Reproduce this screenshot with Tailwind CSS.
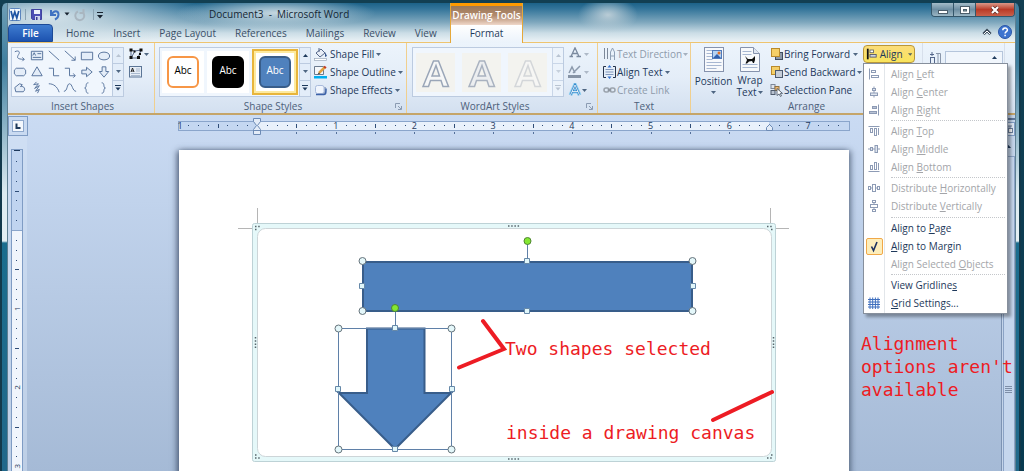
<!DOCTYPE html>
<html lang="en">
<head>
<meta charset="utf-8">
<title>Document3 - Microsoft Word</title>
<script src="https://cdn.jsdelivr.net/npm/@tailwindcss/browser@4"></script>
</head>
<body class="min-h-screen bg-linear-to-b from-[#123f52] to-[#073a50] font-['Open_Sans','Noto_Sans',sans-serif] text-[10px] leading-[14px] text-[#1e395b]">
<svg class="hidden" aria-hidden="true">
  <symbol id="caret" viewBox="0 0 5 3"><path d="M0 0h5L2.500 3z" fill="currentColor" opacity=".75"/></symbol>
  <symbol id="up" viewBox="0 0 5 3"><path d="M0 3h5L2.500 0z" fill="currentColor"/></symbol>
  <symbol id="more" viewBox="0 0 6 6"><path d="M0 .5h6" stroke="currentColor"/><path d="M.5 2.500h5L3 5.500z" fill="currentColor"/></symbol>
  <symbol id="launch" viewBox="0 0 7 7"><path d="M.5 5V.5H5M3 3l3 3M6.500 3v3.500H3" fill="none" stroke="#8b9bb2"/></symbol>
</svg>
<div class="flex h-screen min-h-[471px] pt-[3px]">
  <div class="w-2 shrink-0 rounded-tl-md border-l-2 border-r border-[#12394b] border-r-[#5e7f92] bg-[linear-gradient(to_bottom,#6f9fb7_0,#3f7f9f_60px,#dcebf1_190px,#e4eff3_238px,#1b6d8e_240px,#20688a_100%)]"></div>

  <div class="flex min-w-0 flex-1 flex-col">
    <header class="flex h-10 bg-[radial-gradient(ellipse_30px_18px_at_600px_12px,#b9ccd6_0,#b9ccd600_100%),linear-gradient(to_bottom,#1c6288_0,#34759a_15%,#7ea7bd_48%,#cbdde6_75%,#f0f5f8_100%)]">
      <div class="flex w-[442px] flex-col border-b border-[#eec46f] bg-[radial-gradient(ellipse_100px_16px_at_268px_10px,#c5d7e0_0,#c5d7e000_100%),radial-gradient(ellipse_160px_40px_at_40px_14px,#d5e3ea_0,#d5e3ea00_100%)]">
        <div class="flex h-[21px] items-center">
          <svg class="h-4 w-[100px]" viewBox="8 5 100 16" fill="none">
            <rect x="9.500" y="7.500" width="11" height="12" rx="1" fill="#f3f8fd" stroke="#5b84bd"/><path d="M11 10l1.800 7 2-6 2 6 2-7" stroke="#1f55a4" stroke-width="1.700"/>
            <path d="M25.500 8v11M93.500 8v11" stroke="#8aa3b2"/>
            <path d="M31.500 8.500h10v10h-9l-1-1z" fill="#4d4fb4" stroke="#4143a0"/><path d="M34 9h6v4h-6z" fill="#eef2fb"/><path d="M35 15h5v4h-5z" fill="#cfd5ee"/><path d="M36 16h1.500v3H36z" fill="#3a3c90"/>
            <path d="M51 9v5h5M51.500 13.500c3-5 7-3.500 7 0 0 2-1.500 4-3.500 5" stroke="#4072c2" stroke-width="2"/>
            <path d="M64.500 11.500h5l-2.500 3zM97 14h6l-3 3.500z" fill="#17222e"/><path d="M97 11.500h6" stroke="#17222e"/>
            <path d="M78 10.500a4.500 4.500 0 1 0 5 1M83.500 8v4h-4" stroke="#a9b6c0" stroke-width="2"/>
          </svg>
          <h1 class="ml-[101px] whitespace-pre text-[10px] text-[#142633]">Document3  -  Microsoft Word</h1>
        </div>
        <nav class="flex h-[18px] items-stretch whitespace-nowrap text-[#3a4e67]">
          <button class="w-[45px] shrink-0 rounded-t-sm border border-[#1c4a97] bg-linear-to-b from-[#3f7cd0] to-[#1d53b0] font-semibold text-white">File</button>
          <div class="ml-[13px] flex gap-[19px]">
            <button>Home</button><button>Insert</button><button>Page Layout</button><button>References</button><button>Mailings</button><button>Review</button><button>View</button>
          </div>
        </nav>
      </div>
      <div class="flex w-[73px] flex-col border-x border-[#e5a83a]">
        <div class="flex h-[22px] items-center justify-center whitespace-nowrap border-t-3 border-[#ff9a00] bg-linear-to-b from-[#9a7858] via-[#b28b6e] to-[#f0d8ca] pb-0.5 font-semibold text-white">Drawing Tools</div>
        <button class="flex-1 bg-linear-to-b from-white to-[#ebf3fb] pb-0.5">Format</button>
      </div>
      <div class="flex flex-1 flex-col items-end border-b border-[#eec46f]">
        <div class="flex h-[14px] overflow-hidden rounded-b-sm border border-t-0 border-[#34566a]">
          <button aria-label="Minimize" class="flex w-[22px] items-center justify-center border-r border-[#34566a] bg-linear-to-b from-[#a4bcc9] via-[#6d8ea2] to-[#9bb6c4]"><svg class="h-3 w-3" viewBox="0 0 12 12"><rect x="1.500" y="6.500" width="9" height="3" fill="#fff" stroke="#4c5e6b"/></svg></button>
          <button aria-label="Maximize" class="flex w-[22px] items-center justify-center border-r border-[#34566a] bg-linear-to-b from-[#a4bcc9] via-[#6d8ea2] to-[#9bb6c4]"><svg class="h-3 w-3" viewBox="0 0 12 12"><rect x="1.500" y="2.500" width="9" height="7" fill="#fff" stroke="#4c5e6b"/><rect x="4.500" y="5.500" width="3" height="1.500" fill="#8aa" stroke="#4c5e6b"/></svg></button>
          <button aria-label="Close" class="flex w-[38px] items-center justify-center bg-linear-to-b from-[#d99788] via-[#b93a27] to-[#c9604a]"><svg class="h-3 w-3" viewBox="0 0 12 12" fill="none"><path d="M3 3l6 6M9 3l-6 6" stroke="#5b2a26" stroke-width="3.600"/><path d="M3 3l6 6M9 3l-6 6" stroke="#fff" stroke-width="2.200"/></svg></button>
        </div>
        <div class="flex flex-1 items-center gap-[5px] pr-[3px] pt-1">
          <button aria-label="Minimize the ribbon"><svg class="h-3 w-3" viewBox="0 0 12 12" fill="none"><path d="M2.500 8L6 4.500 9.500 8" stroke="#3b4a5a" stroke-width="3"/><path d="M3 8l3-3 3 3" stroke="#fff"/></svg></button>
          <button aria-label="Help"><svg class="h-[14px] w-[14px]" viewBox="0 0 14 14"><circle cx="7" cy="7" r="6.500" fill="#3d74cf" stroke="#2a56a6"/><path d="M4.800 5.300c0-3 4.600-3 4.600-.3 0 1.700-2.300 1.700-2.300 3.600M7.100 9.800v1.500" fill="none" stroke="#fff" stroke-width="1.500"/></svg></button>
        </div>
      </div>
    </header>

    <section aria-label="Ribbon" class="relative z-10 flex h-[72px] border-b-2 border-[#c5a569] bg-linear-to-b from-[#ecf4fc] via-[#e4edf8] to-[#d3e0f0]">
      <div class="flex w-[147px] shrink-0 flex-col border-r border-[#f0cf8e] pl-[3px] pt-1">
        <div class="flex gap-1">
          <div class="flex h-[50px] w-[113px] border border-[#bccbe0] bg-[#f0f6fd]">
            <div id="shapes" class="grid flex-1 grid-cols-6 grid-rows-3"></div>
            <div class="flex w-[11px] flex-col divide-y divide-[#bccbe0] border-l border-[#bccbe0] bg-[#e3edf9]">
              <button aria-label="Scroll up" class="flex flex-1 items-center justify-center text-[#b9c4d2]"><svg class="h-[3px] w-[5px]"><use href="#up"/></svg></button>
              <button aria-label="Scroll down" class="flex flex-1 items-center justify-center"><svg class="h-[3px] w-[5px]"><use href="#caret"/></svg></button>
              <button aria-label="More shapes" class="flex flex-1 items-center justify-center"><svg class="h-[6px] w-[6px]"><use href="#more"/></svg></button>
            </div>
          </div>
          <div class="flex flex-col">
            <button aria-label="Edit shape" class="flex h-[14px] items-center"><svg class="h-[14px] w-4" viewBox="0 0 16 14" fill="none"><path d="M3 3l4 1 6-1M3 3v8h7L13 3M3 11l4-7" stroke="#55678a"/><path d="M1.500 1.500h3v3h-3zM11.500 1.500h3v3h-3zM1.500 9h3v3h-3zM9 9h3v3H9zM5.500 3.500h2v2h-2zM11 6h2v2h-2z" fill="#111"/></svg><svg class="h-[3px] w-[5px]"><use href="#caret"/></svg></button>
            <button aria-label="Text box" class="mt-1 flex h-[14px] items-center"><svg class="h-3 w-[14px]" viewBox="0 0 14 12" fill="none"><rect x="1.500" y=".5" width="12" height="10.500" fill="#e6edf6" stroke="#5b7596"/><path d="M3 6l1.500-4L6 6M3.500 5h2" stroke="#222"/><path d="M8 3h4M8 5h4M3 7.500h9M3 9.500h9" stroke="#a9b9ce"/></svg></button>
          </div>
        </div>
        <div class="pt-0.5 text-center text-[#4c607a]">Insert Shapes</div>
      </div>

      <div class="flex w-[252px] shrink-0 flex-col border-r border-[#f0cf8e] pl-1 pt-1">
        <div class="flex gap-[3px]">
          <div class="flex h-[50px] w-[152px] shrink-0 border border-[#bccbe0] bg-[#f0f6fd]">
            <div class="flex flex-1 items-center gap-[3px] pl-[2px]">
              <button class="flex h-[42px] w-[42px] items-center justify-center bg-white"><span class="flex h-8 w-8 items-center justify-center rounded-md border-2 border-[#f79646] pb-1 text-black">Abc</span></button>
              <button class="flex h-[42px] w-[42px] items-center justify-center bg-white"><span class="flex h-8 w-8 items-center justify-center rounded-md border-2 border-black bg-black pb-1 text-white">Abc</span></button>
              <button class="flex h-[46px] w-[46px] items-center justify-center border-2 border-[#e8b53c] bg-white shadow-[inset_0_0_0_2px_#fdeaa0]"><span class="flex h-8 w-8 items-center justify-center rounded-md border-2 border-[#385d8a] bg-[#4f81bd] pb-1 text-white">Abc</span></button>
            </div>
            <div class="flex w-[11px] flex-col divide-y divide-[#bccbe0] border-l border-[#bccbe0] bg-[#e3edf9]">
              <button aria-label="Scroll up" class="flex flex-1 items-center justify-center"><svg class="h-[3px] w-[5px]"><use href="#up"/></svg></button>
              <button aria-label="Scroll down" class="flex flex-1 items-center justify-center"><svg class="h-[3px] w-[5px]"><use href="#caret"/></svg></button>
              <button aria-label="More styles" class="flex flex-1 items-center justify-center"><svg class="h-[6px] w-[6px]"><use href="#more"/></svg></button>
            </div>
          </div>
          <div class="flex flex-col">
            <button class="flex h-[14px] items-center gap-0.5 whitespace-nowrap"><svg class="h-[14px] w-[14px] shrink-0" viewBox="0 0 14 14" fill="none"><path d="M2 6l5-4 4 4-5 4z" fill="#e8eef7" stroke="#55678a"/><path d="M5 1v4" stroke="#55678a"/><path d="M11 5l2 4-2 1z" fill="#35568f"/><rect x=".5" y="11.500" width="12" height="2" fill="#fff" stroke="#9aa8ba" stroke-width=".7"/></svg>Shape Fill<svg class="h-[3px] w-[5px]"><use href="#caret"/></svg></button>
            <button class="mt-1 flex h-[14px] items-center gap-0.5 whitespace-nowrap"><svg class="h-[14px] w-[14px] shrink-0" viewBox="0 0 14 14" fill="none"><path d="M.5 1.500h9v8h-9z" fill="#f4f7fb" stroke="#6b7b90"/><path d="M5 8l6-6" stroke="#e0a040" stroke-width="2.500"/><path d="M10 1.500l2 1.500" stroke="#c03a2a" stroke-width="2"/><path d="M3.500 9.500l1.500-2 1 1z" fill="#222"/><rect y="11" width="13" height="2.500" fill="#00aeef"/></svg>Shape Outline<svg class="h-[3px] w-[5px]"><use href="#caret"/></svg></button>
            <button class="mt-1 flex h-[14px] items-center gap-0.5 whitespace-nowrap"><svg class="h-[14px] w-[14px] shrink-0" viewBox="0 0 14 14"><path d="M4 4h8l-1 7-7 1z" fill="#9aabc8"/><rect x="1.500" y="2.500" width="8.500" height="8" rx="2" fill="#f0f5fd" stroke="#a9bbdc"/><path d="M2 11.500h8c2 0 2-2 2-6" fill="none" stroke="#3c62a8" stroke-width="1.500"/></svg>Shape Effects<svg class="h-[3px] w-[5px]"><use href="#caret"/></svg></button>
          </div>
        </div>
        <div class="flex items-center pt-0.5 text-[#4c607a]"><span class="flex-1 pr-2 text-center">Shape Styles</span><button aria-label="Format shape" class="mr-1"><svg class="h-[7px] w-[7px]"><use href="#launch"/></svg></button></div>
      </div>

      <div class="flex w-[191px] shrink-0 flex-col border-r border-[#f0cf8e] pl-[5px] pt-1">
        <div class="flex gap-1">
          <div class="flex h-[50px] w-[152px] border border-[#bccbe0] bg-[#f0f6fd]">
            <div class="flex flex-1 items-center gap-[7px] pl-[3px]">
              <button aria-label="WordArt style 1" class="bg-[#f3f3ef]"><svg class="h-[39px] w-[39px]" viewBox="0 0 39 39"><path d="M7 33.500L17.500 8h5L32.500 33.500h-5.500l-2-6H14.500l-2 6zM16 23h7.500L20 12.500z" fill="#f6f7f7" stroke="#9aa6b8" stroke-width="1.500"/></svg></button>
              <button aria-label="WordArt style 2" class="bg-[#f3f3ef]"><svg class="h-[39px] w-[39px]" viewBox="0 0 39 39"><path d="M7 33.500L17.500 8h5L32.500 33.500h-5.500l-2-6H14.500l-2 6zM16 23h7.500L20 12.500z" fill="#eceef0" stroke="#a9b2c0" stroke-width="1.500"/></svg></button>
              <button aria-label="WordArt style 3" class="bg-[#f3f3ef]"><svg class="h-[39px] w-[39px]" viewBox="0 0 39 39"><path d="M7 33.500L17.500 8h5L32.500 33.500h-5.500l-2-6H14.500l-2 6zM16 23h7.500L20 12.500z" fill="#f6f6f4" stroke="#d3d6d9" stroke-width="1.500"/></svg></button>
            </div>
            <div class="flex w-[11px] flex-col divide-y divide-[#c9d6e8] border-l border-[#c9d6e8] bg-[#ecf3fb] text-[#b9c4d2]">
              <button aria-label="Scroll up" class="flex flex-1 items-center justify-center"><svg class="h-[3px] w-[5px]"><use href="#up"/></svg></button>
              <button aria-label="Scroll down" class="flex flex-1 items-center justify-center"><svg class="h-[3px] w-[5px]"><use href="#caret"/></svg></button>
              <button aria-label="More styles" class="flex flex-1 items-center justify-center"><svg class="h-[6px] w-[6px]"><use href="#more"/></svg></button>
            </div>
          </div>
          <div class="flex flex-col">
            <button aria-label="Text fill" class="flex h-[14px] items-center gap-0.5 text-[#9aa6b6]"><svg class="h-[14px] w-[14px]" viewBox="0 0 14 14" fill="none"><path d="M3 9.500L7 .8l4 8.700M4.500 6.500h5M1.500 9.500h3.500M8.500 9.500H13" stroke="#7b8a9f" stroke-width="1.300"/></svg><svg class="h-[3px] w-[5px]"><use href="#caret"/></svg></button>
            <button aria-label="Text outline" class="mt-1 flex h-[14px] items-center gap-0.5 text-[#9aa6b6]"><svg class="h-[14px] w-[14px]" viewBox="0 0 14 14" fill="none"><path d="M1 8l3-6 3 6M5 8l7-7" stroke="#8c9aad" stroke-width="1.500"/><rect y="10" width="13" height="3" fill="#8693a5"/></svg><svg class="h-[3px] w-[5px]"><use href="#caret"/></svg></button>
            <button aria-label="Text effects" class="mt-1 flex h-[14px] items-center"><svg class="h-[14px] w-[14px]" viewBox="0 0 14 14" fill="none"><path d="M2.500 12L7 2l4.500 10M4 8.500h6" stroke="#8fd0f2" stroke-width="4"/><path d="M2.500 12L7 2l4.500 10M4 8.500h6" stroke="#2f7fc4" stroke-width="2"/><path d="M2.500 12L7 2l4.500 10M4 8.500h6" stroke="#fff" stroke-width=".8"/></svg><svg class="h-[3px] w-[5px]"><use href="#caret"/></svg></button>
          </div>
        </div>
        <div class="flex items-center pt-0.5 text-[#4c607a]"><span class="flex-1 pr-2 text-center">WordArt Styles</span><button aria-label="Format text effects" class="mr-1"><svg class="h-[7px] w-[7px]"><use href="#launch"/></svg></button></div>
      </div>

      <div class="flex w-[93px] shrink-0 flex-col border-r border-[#f0cf8e] pl-[5px] pt-1">
        <div class="flex h-[50px] flex-col">
          <button class="flex h-[14px] items-center gap-px whitespace-nowrap text-[#8e9bab]"><svg class="h-[14px] w-[13px] shrink-0" viewBox="0 0 13 14" fill="none"><path d="M1.500 1v11M4.500 1v11" stroke="#7c8899"/><path d="M7.500 13V5M11.500 13V5M7.500 9h4M7.500 5l2-4 2 4" stroke="#8fa0b5"/></svg>Text Direction<svg class="h-[3px] w-[5px]"><use href="#caret"/></svg></button>
          <button class="mt-1 flex h-[14px] items-center gap-px whitespace-nowrap"><svg class="h-[14px] w-[13px] shrink-0" viewBox="0 0 13 14" fill="none"><path d="M3 1.500H.5v11H3M10 1.500h2.500v11H10" stroke="#24324a"/><path d="M2.500 4.500h8M2.500 7h8M2.500 9.500h8" stroke="#8096bb"/><path d="M4.500 2.500h4L6.500 0zM4.500 11.500h4L6.500 14z" fill="#2f6fd0"/></svg>Align Text<svg class="ml-0.5 h-[3px] w-[5px]"><use href="#caret"/></svg></button>
          <button class="mt-1 flex h-[14px] items-center gap-px whitespace-nowrap text-[#8e9bab]"><svg class="h-[14px] w-[13px] shrink-0" viewBox="0 0 13 14" fill="none"><rect x="1" y="5" width="5" height="4" rx="2" stroke="#9aa2ac" stroke-width="1.500"/><rect x="7" y="5" width="5" height="4" rx="2" stroke="#9aa2ac" stroke-width="1.500"/><path d="M4.500 7h4" stroke="#7c858f"/></svg>Create Link</button>
        </div>
        <div class="pr-[5px] pt-0.5 text-center text-[#4c607a]">Text</div>
      </div>

      <div class="flex w-[232px] shrink-0 flex-col border-r border-[#d7dfeb] pt-1">
        <div class="flex h-[50px]">
          <button class="flex w-[45px] shrink-0 flex-col items-center"><svg class="h-[27px] w-5" viewBox="0 0 20 27" fill="none"><rect x=".5" y=".5" width="19" height="24" fill="#f7f9fc" stroke="#8592ad"/><path d="M2.500 3.500h6M2.500 6.500h6M2.500 9.500h6M2.500 12.500h6M2.500 15.500h15M2.500 18.500h15M2.500 21.500h10" stroke="#a7b7d2"/><rect x="8.500" y="3.500" width="9" height="8" fill="#b5d2f2" stroke="#4f79ba"/><path d="M9 11l4-4 4 4z" fill="#2f5fae"/><circle cx="15" cy="6" r="1.500" fill="#e0702a"/></svg><span>Position</span><svg class="mt-[3px] h-[3px] w-[5px]"><use href="#caret"/></svg></button>
          <button class="flex w-[28px] shrink-0 flex-col items-center"><svg class="h-[27px] w-5 shrink-0" viewBox="0 0 20 27" fill="none"><path d="M.5.5h13l6 6v18H.5z" fill="#f7f9fc" stroke="#8592ad"/><path d="M13.500.5v6h6" fill="#dfe6f2" stroke="#8592ad"/><path d="M2.500 4.500h9M2.500 7.500h9M2.500 17.500h15M2.500 20.500h15" stroke="#a7b7d2"/><path d="M5 9l3 3h4l3-3v4l-1 3h-1l-1-2-3 .5L7 16.500H5.500L7 13z" fill="#111"/></svg><span class="whitespace-nowrap leading-[12px]">Wrap</span><span class="flex items-center gap-0.5 leading-[12px]">Text<svg class="h-[3px] w-[5px]"><use href="#caret"/></svg></span></button>
          <div class="ml-[6px] flex flex-col">
            <button class="flex h-[14px] items-center gap-px whitespace-nowrap"><svg class="h-[14px] w-[13px] shrink-0" viewBox="0 0 13 14"><rect x="5.500" y="5.500" width="7" height="7" fill="#8c98a8" stroke="#3f4c5e"/><rect x="1.500" y="1.500" width="8" height="8" fill="#f5cf67" stroke="#b98a2c"/></svg>Bring Forward<svg class="ml-0.5 h-[3px] w-[5px]"><use href="#caret"/></svg></button>
            <button class="mt-1 flex h-[14px] items-center gap-px whitespace-nowrap"><svg class="h-[14px] w-[13px] shrink-0" viewBox="0 0 13 14"><rect x="1.500" y="1.500" width="8" height="8" fill="#f5cf67" stroke="#b98a2c"/><rect x="5.500" y="5.500" width="7" height="7" fill="#c6cdd7" stroke="#4c596c"/></svg>Send Backward<svg class="h-[3px] w-[5px]"><use href="#caret"/></svg></button>
            <button class="mt-1 flex h-[14px] items-center gap-px whitespace-nowrap"><svg class="h-[14px] w-[13px] shrink-0" viewBox="0 0 13 14"><rect x="1" y="1.500" width="4" height="4" fill="#dfe4ec" stroke="#7c8798"/><rect x="5" y="3.500" width="4" height="4" fill="#f1bb74" stroke="#8d7142"/><rect x="1" y="7.500" width="4" height="4" fill="#b9c3d1" stroke="#4f5b6d"/><path d="M7 5.500v7l2-1.500 1.500 2.500 1-.6-1.300-2.500H12.500z" fill="#fff" stroke="#3f4c5e" stroke-width=".8"/></svg>Selection Pane</button>
          </div>
          <div class="relative ml-auto mr-[7px] w-[52px] shrink-0">
            <button aria-haspopup="menu" aria-expanded="true" class="-mt-0.5 flex h-[18px] w-[52px] items-center gap-[3px] rounded-sm border border-[#b8963a] bg-linear-to-b from-[#fbdc78] to-[#f9e45c] px-0.5"><svg class="h-3 w-3" viewBox="0 0 12 12"><path d="M1 0h2v12H1z" fill="#111"/><rect x="4.500" y="1.500" width="4" height="3" fill="#fff" stroke="#666"/><rect x="4.500" y="6.500" width="7" height="3" fill="#cfd6e2" stroke="#556"/></svg>Align<svg class="ml-0.5 h-[3px] w-[5px]"><use href="#caret"/></svg></button>
            <div role="menu" class="absolute left-0 top-4 w-[145px] border border-[#868f9c] bg-[linear-gradient(to_right,#fff_20px,#e2e6ea_20px,#e2e6ea_21px,#fff_21px)] py-px shadow-[3px_3px_3px_#00000055]">
              <button role="menuitem" disabled class="flex h-[18px] w-full items-center gap-[11px] pl-1 text-[#a3a5a9]"><svg class="h-3 w-3" viewBox="0 0 12 12" fill="none" stroke="#8d9bb5"><path d="M1.500.5v11"/><rect x="3.500" y="2.500" width="4" height="2"/><rect x="3.500" y="7.500" width="7" height="2"/></svg><span>Align <u>L</u>eft</span></button>
              <button role="menuitem" disabled class="flex h-[18px] w-full items-center gap-[11px] pl-1 text-[#a3a5a9]"><svg class="h-3 w-3" viewBox="0 0 12 12" fill="none" stroke="#8d9bb5"><path d="M6 .5v11"/><rect x="4.500" y="2.500" width="3" height="2" fill="#dfe5ee"/><rect x="2.500" y="7" width="7" height="2.500" fill="#dfe5ee"/></svg><span>Align <u>C</u>enter</span></button>
              <button role="menuitem" disabled class="flex h-[18px] w-full items-center gap-[11px] pl-1 text-[#a3a5a9]"><svg class="h-3 w-3" viewBox="0 0 12 12" fill="none" stroke="#8d9bb5"><path d="M10.500.5v11"/><rect x="4.500" y="2.500" width="4" height="2" fill="#b9c3d5"/><rect x="1.500" y="7.500" width="7" height="2" fill="#b9c3d5"/></svg><span>Align <u>R</u>ight</span></button>
              <div role="separator" class="flex h-[3px] items-center pl-[27px] pr-0.5"><div class="flex-1 border-t border-dotted border-[#c4c7cb]"></div></div>
              <button role="menuitem" disabled class="flex h-[18px] w-full items-center gap-[11px] pl-1 text-[#a3a5a9]"><svg class="h-3 w-3" viewBox="0 0 12 12" fill="none" stroke="#8d9bb5"><path d="M.5 1.500h11M10.500 3v7"/><rect x="2.500" y="3.500" width="2" height="4"/><rect x="6.500" y="3.500" width="2" height="7"/></svg><span>Align <u>T</u>op</span></button>
              <button role="menuitem" disabled class="flex h-[18px] w-full items-center gap-[11px] pl-1 text-[#a3a5a9]"><svg class="h-3 w-3" viewBox="0 0 12 12" fill="none" stroke="#8d9bb5"><path d="M0 6h12"/><rect x="2.500" y="4.500" width="2" height="3" fill="#dfe5ee"/><rect x="7" y="2.500" width="2.500" height="7" fill="#dfe5ee"/></svg><span>Align <u>M</u>iddle</span></button>
              <button role="menuitem" disabled class="flex h-[18px] w-full items-center gap-[11px] pl-1 text-[#a3a5a9]"><svg class="h-3 w-3" viewBox="0 0 12 12" fill="none" stroke="#8d9bb5"><path d="M.5 10.500h11M10.500 2v7"/><rect x="2.500" y="4.500" width="2" height="4"/><rect x="6.500" y="1.500" width="2" height="7"/></svg><span>Align <u>B</u>ottom</span></button>
              <div role="separator" class="flex h-[3px] items-center pl-[27px] pr-0.5"><div class="flex-1 border-t border-dotted border-[#c4c7cb]"></div></div>
              <button role="menuitem" disabled class="flex h-[18px] w-full items-center gap-[11px] whitespace-nowrap pl-1 text-[#a3a5a9]"><svg class="h-3 w-3" viewBox="0 0 12 12" fill="none" stroke="#8d9bb5"><path d="M3 6h6"/><rect x=".5" y="4.500" width="2" height="3"/><rect x="4.500" y="2.500" width="3" height="7" fill="#fff"/><rect x="9.500" y="4.500" width="2" height="3"/></svg><span>Distribute <u>H</u>orizontally</span></button>
              <button role="menuitem" disabled class="flex h-[18px] w-full items-center gap-[11px] whitespace-nowrap pl-1 text-[#a3a5a9]"><svg class="h-3 w-3" viewBox="0 0 12 12" fill="none" stroke="#8d9bb5"><path d="M6 3v6"/><rect x="4.500" y=".5" width="3" height="2"/><rect x="2.500" y="4.500" width="7" height="3" fill="#fff"/><rect x="4.500" y="9.500" width="3" height="2"/></svg><span>Distribute <u>V</u>ertically</span></button>
              <div role="separator" class="flex h-1 items-center pl-[27px] pr-0.5"><div class="flex-1 border-t border-dotted border-[#c4c7cb]"></div></div>
              <button role="menuitem" class="flex h-[18px] w-full items-center pl-[27px]"><span>Align to <u>P</u>age</span></button>
              <button role="menuitemcheckbox" aria-checked="true" class="flex h-[18px] w-full items-center gap-2 pl-0.5"><svg class="h-[17px] w-[17px]" viewBox="0 0 17 17" fill="none"><rect x=".5" y=".5" width="16" height="16" rx="1.500" fill="#fdeebb" stroke="#f0a848"/><path d="M5.500 8.500l2 4L11 4" stroke="#1c3160" stroke-width="1.600"/></svg><span><u>A</u>lign to Margin</span></button>
              <button role="menuitem" disabled class="flex h-[18px] w-full items-center whitespace-nowrap pl-[27px] text-[#a3a5a9]"><span>Align Selected <u>O</u>bjects</span></button>
              <div role="separator" class="flex h-[3px] items-center pl-[27px] pr-0.5"><div class="flex-1 border-t border-dotted border-[#c4c7cb]"></div></div>
              <button role="menuitem" class="flex h-[18px] w-full items-center pl-[27px]"><span>View Gridline<u>s</u></span></button>
              <button role="menuitem" class="flex h-[18px] w-full items-center gap-[11px] pl-1"><svg class="h-3 w-3" viewBox="0 0 12 12" stroke="#3f6fbe"><path d="M0 2.500h12M0 5h12M0 7.500h12M0 10h12M2 .5v11.500M4.700.5v11.500M7.400.5v11.500M10 .5v11.500"/></svg><span><u>G</u>rid Settings...</span></button>
            </div>
          </div>
        </div>
        <div class="pt-0.5 text-center text-[#4c607a]">Arrange</div>
      </div>
      <div class="mr-[10px] flex flex-1 items-start gap-1 border-r border-[#d7dfeb] pl-[6px] pt-2">
        <svg class="h-[14px] w-3 shrink-0" viewBox="0 0 12 14" fill="none" stroke="#55678a"><path d="M1 3.500h4M3 1v4"/><rect x="1.500" y="6.500" width="4" height="6"/><path d="M7 2.500h4.500V13M9 2.500V13" stroke="#8a97ab"/></svg>
        <div class="flex h-[18px] w-[58px] items-start border border-[#b5c5db] bg-[#f1f6fc] pr-[5px]"><input aria-label="Shape height" class="h-[10px] w-10 min-w-0 flex-1" type="text"><svg class="mt-1 h-[3px] w-[5px]"><use href="#up"/></svg></div>
      </div>
    </section>

    <main class="relative flex min-h-0 flex-1 bg-linear-to-b from-[#cadbf3] to-[#a5bad6]">
      <div class="flex w-[19px] shrink-0 flex-col bg-[#d5e3f5]/50">
        <button aria-label="Tab selector" class="mt-px flex h-5 w-5 items-center justify-center border border-[#7f9cc4] bg-[#c9daf1]"><svg class="h-3 w-3" viewBox="0 0 12 12"><rect x=".5" y=".5" width="11" height="11" fill="#f4f8fd" stroke="#8fa9cd"/><path d="M4.500 3.500v4.500h4" fill="none" stroke="#1e395b" stroke-width="2"/></svg></button>
        <div class="mt-[13px] min-h-0 flex-1 overflow-hidden pl-[3px]"><svg id="vruler" class="h-[322px] w-[13px] font-['Open_Sans',sans-serif] text-[8px]" viewBox="0 0 13 322"><rect x=".5" y=".5" width="11" height="340" fill="#c0d4f0" stroke="#7f9cc4"/><rect x="1" y="82" width="10" height="250" fill="#f0f5fc"/><path d="M1 81.500h10" stroke="#8aa5cb"/></svg></div>
      </div>
      <div class="flex min-w-0 flex-1 flex-col items-center overflow-hidden">
        <svg id="hruler" class="mt-[2px] h-[18px] w-[674px] shrink-0 font-['Open_Sans',sans-serif] text-[9px]" viewBox="177 117 674 18"><rect x="178.500" y="121.500" width="671" height="9" fill="#c4d7f1" stroke="#8aa5cb"/><rect x="257" y="122" width="512" height="8" fill="#e9f1fb"/></svg>
        <div class="mt-[15px] w-[670px] shrink-0 bg-white shadow-[-2px_1px_6px_#3d4c66cc,2px_1px_6px_#3d4c6699]">
          <svg id="page" class="block h-[340px] w-[670px]" viewBox="179 150 670 340" fill="none">
            <path d="M257.500 208v16M238 228.500h16M770.500 208v16M774 228.500h15" stroke="#b5b5b5"/>
            <rect x="252.500" y="223.500" width="523" height="238" rx="2" fill="#e5f8f9" stroke="#bdd2d6"/>
            <rect x="257.500" y="228.500" width="514" height="228" rx="8" fill="#fff" stroke="#cdd5d8"/>
            <g stroke="#57646b" stroke-width="1.500" stroke-dasharray="1.500 1.700"><path d="M508 226h12M508 459h12M255.500 337v12M773.500 337v12M255 226.500h5M255 229.500h3M767 226.500h6M771 229.500h3M255 455h3M255 458h6M771 455h3M767 458h6"/></g>
            <rect x="363" y="262" width="329" height="49" fill="#4f81bd" stroke="#385d8a" stroke-width="2"/>
            <path d="M367 328.500h57.500V393H451l-56 56-56-56h28z" fill="#4f81bd" stroke="#385d8a" stroke-width="2"/>
            <rect x="338.500" y="328.500" width="113" height="121" stroke="#5f80a8"/>
            <path d="M527.500 244v17M395.500 311v17" stroke="#5f80a8"/>
            <g stroke="#4e8530" fill="#84e832"><circle cx="527.500" cy="241" r="3.500"/><circle cx="395" cy="308" r="3.500"/></g>
            <g stroke="#66747c" fill="#e4f7fa"><circle cx="362.500" cy="261" r="3.500"/><circle cx="692.500" cy="261" r="3.500"/><circle cx="362.500" cy="311" r="3.500"/><circle cx="692.500" cy="311" r="3.500"/><circle cx="338.500" cy="328.500" r="3.500"/><circle cx="451.500" cy="328.500" r="3.500"/><circle cx="338.500" cy="449.500" r="3.500"/><circle cx="451.500" cy="449.500" r="3.500"/></g>
            <g stroke="#6688a8" fill="#e0f6fa"><path d="M524.500 258.500h5v5h-5zM524.500 308.500h5v5h-5zM359.500 283.500h5v5h-5zM690.500 283.500h5v5h-5zM392.500 325.500h5v5h-5zM392.500 446.500h5v5h-5zM335.500 386.500h5v5h-5zM449.500 386.500h5v5h-5z"/></g>
            <path d="M483 321l21 28-45 18.500M713 420l59-28" stroke="#ed1c24" stroke-width="4" stroke-linecap="round"/>
            <g fill="#ed1c24" class="font-['DejaVu_Sans_Mono',monospace] text-[18px]"><text x="505" y="355">Two shapes selected</text><text x="506" y="439">inside a drawing canvas</text></g>
          </svg>
        </div>
      </div>
      <div class="flex w-[14px] shrink-0 flex-col items-center gap-1.5 border-l border-[#7d93b3] bg-[#c3d4ea] pt-[3px]">
        <div class="h-0.5 w-3 bg-[#5d7599]"></div>
        <button aria-label="View ruler" class="-mt-1 h-[14px] w-3 border border-[#7f9cc4] bg-[#dfe9f6]"><svg class="h-3 w-[10px]" viewBox="0 0 10 12" fill="none" stroke="#6b7f9d"><path d="M2 8V3h6M4 3v2M6 3v2M2 5h2"/><rect x="4.500" y="5.500" width="4" height="4" fill="#fff"/></svg></button>
        <button aria-label="Scroll up" class="flex h-2 items-center"><svg class="h-[3px] w-[5px]"><use href="#up"/></svg></button>
        <div class="flex w-3 flex-1 items-center justify-center border-x border-t border-[#8ba3c6] bg-[#c5d6ed] pt-[150px]"><svg class="h-[7px] w-[7px]" viewBox="0 0 7 7" stroke="#7d8ea8"><path d="M0 .5h7M0 2.500h7M0 4.500h7M0 6.500h7"/></svg></div>
      </div>
      <p class="absolute right-[-1px] top-[217px] w-[155px] font-['DejaVu_Sans_Mono',monospace] text-[18px] leading-[23px] text-[#ed1c24]">Alignment options aren't available</p>
    </main>
  </div>

  <div class="mr-[3px] w-[6px] shrink-0 rounded-tr-md border-l border-r-2 border-[#12394b] border-l-[#5e7f92] bg-[linear-gradient(to_bottom,#3f7f9f_0,#3f7f9f_60px,#dcebf1_190px,#e4eff3_238px,#1b6d8e_240px,#20688a_100%)]"></div>
</div>
<script>
const NS = 'http://www.w3.org/2000/svg';
function add(parent, tag, attrs, text) {
  const e = document.createElementNS(NS, tag);
  for (const k in attrs) e.setAttribute(k, attrs[k]);
  if (text) e.textContent = text;
  parent.appendChild(e);
}
const h = document.getElementById('hruler');
for (let i = -7; i <= 59; i++) {
  const x = 257 + i * 9.84;
  if (i % 8 === 0) { if (i && i / 8 <= 7) add(h, 'text', {x, y: 129, 'text-anchor': 'middle', fill: '#1e395b'}, String(i / 8)); }
  else if (i % 4 === 0) add(h, 'rect', {x: Math.round(x), y: 124, width: 1, height: 4, fill: '#2f4d77'});
  else add(h, 'rect', {x: Math.round(x), y: 125, width: 1, height: 1, fill: '#2f4d77'});
  if (i > 0 && i % 4 === 0 && i < 52) add(h, 'rect', {x: Math.round(x), y: 132, width: 1, height: 2, fill: '#54709a'});
}
add(h, 'text', {x: 180, y: 129, 'text-anchor': 'middle', fill: '#1e395b'}, '1');
add(h, 'path', {d: 'M253.500 118.500h7v3l-3 4 3 4v5h-7v-5l3-4-3-4zM253.500 130.500h7', fill: '#e3ecf8', stroke: '#6d8bb5'});
add(h, 'path', {d: 'M766.500 130.500v-3l3-3 3 3v3z', fill: '#e3ecf8', stroke: '#6d8bb5'});
const v = document.getElementById('vruler');
for (let i = -7; i <= 31; i++) {
  const y = 81 + i * 9.84;
  if (i % 8 === 0) { if (i) add(v, 'text', {x: 6, y: 0, 'text-anchor': 'middle', fill: '#1e395b', transform: `translate(3 ${y}) rotate(-90) translate(-6 6)`}, String(i / 8)); }
  else if (i % 4 === 0) add(v, 'rect', {x: 4, y: Math.round(y), width: 4, height: 1, fill: '#2f4d77'});
  else add(v, 'rect', {x: 5, y: Math.round(y), width: 1, height: 1, fill: '#2f4d77'});
}
add(v, 'rect', {x: 3, y: 1, width: 6, height: 1, fill: '#1e395b'});
const shapes = [
  ['Elbow connector', 'M3 4c4-2 6 0 4 3s-2 5 6 5M11 10l2 2-2 2'], ['Text box', 'M2.500 3.500h12v9h-12zM4 8l1.500-3L7 8M9 6h4M4 10h9'],
  ['Line', 'M3 3l11 10'], ['Arrow', 'M3 3l11 10M14 9v4h-4'], ['Rectangle', 'M2.500 4.500h12v8h-12z'],
  ['Oval', 'M14.500 8.500c0 5.500-12 5.500-12 0s12-5.500 12 0z'], ['Rounded rectangle', 'M4.500 4.500h8l2 2v4l-2 2h-8l-2-2v-4z'],
  ['Triangle', 'M8.500 3l5.500 9.500H3z'], ['Elbow', 'M3 4.500h5v8h6'], ['Elbow arrow', 'M3 4.500h5v8h6M12 10l2 2.500-2 2'],
  ['Right arrow', 'M3 6.500h5v-3l6 5-6 5v-3H3z'], ['Down arrow', 'M6.500 3h4v5h3l-5 6-5-6h3z'],
  ['Freeform', 'M4 12.500L3 8l5-4 3 1-2 2c4-1 6 3 3 5.500z'], ['Scribble', 'M8 2L5 5l5-1-4 5 5-3-4 6 4-2-2 4'],
  ['Arc', 'M3 4c5 0 9 3 11 9'], ['Curve', 'M2 12c4 0 3-8 6-8s3 8 7 8'],
  ['Left brace', 'M10 3c-4 0-1 5-4 5.500 3 .5 0 5.500 4 5.500'], ['Right brace', 'M6 3c4 0 1 5 4 5.500-3 .5 0 5.500-4 5.500']
];
const grid = document.getElementById('shapes');
for (const [name, d] of shapes) {
  const b = document.createElement('button');
  b.setAttribute('aria-label', name);
  b.className = 'flex items-center justify-center';
  const s = document.createElementNS(NS, 'svg');
  s.setAttribute('class', 'h-4 w-4');
  s.setAttribute('viewBox', '0 0 17 17');
  add(s, 'path', {d, fill: /z/.test(d) ? '#e4edf8' : 'none', stroke: '#53709a'});
  b.appendChild(s);
  grid.appendChild(b);
}
</script>
</body>
</html>
